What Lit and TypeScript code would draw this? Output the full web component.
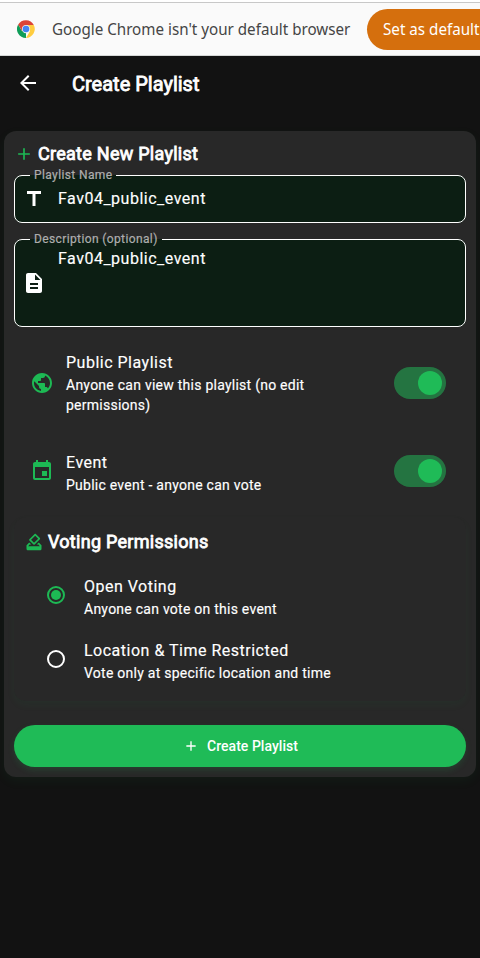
import { LitElement, html, css, svg } from "lit";
import { customElement, property, state } from "lit/decorators.js";

const PATHS: Record<string, string> = {
  back: "M20 11H7.83l5.59-5.59L12 4l-8 8 8 8 1.41-1.41L7.83 13H20v-2z",
  add: "M19 13h-6v6h-2v-6H5v-2h6V5h2v6h6v2z",
  title: "M5 4v3h5.5v12h3V7H19V4z",
  description:
    "M14 2H6c-1.1 0-1.99.9-1.99 2L4 20c0 1.1.89 2 1.99 2H18c1.1 0 2-.9 2-2V8l-6-6zm2 16H8v-2h8v2zm0-4H8v-2h8v2zm-3-5V3.5L18.5 9H13z",
  globe:
    "M12 2C6.48 2 2 6.48 2 12s4.48 10 10 10 10-4.48 10-10S17.52 2 12 2zm-1 17.93c-3.95-.49-7-3.85-7-7.93 0-.62.08-1.21.21-1.79L9 15v1c0 1.1.9 2 2 2v1.93zm6.9-2.54c-.26-.81-1-1.39-1.9-1.39h-1v-3c0-.55-.45-1-1-1H8v-2h2c.55 0 1-.45 1-1V7h2c1.1 0 2-.9 2-2v-.41c2.93 1.19 5 4.06 5 7.41 0 2.08-.8 3.97-2.1 5.39z",
  event:
    "M17 12h-5v5h5v-5zM16 1v2H8V1H6v2H5c-1.11 0-1.99.9-1.99 2L3 19c0 1.1.89 2 2 2h14c1.1 0 2-.9 2-2V5c0-1.1-.9-2-2-2h-1V1h-2zm3 18H5V8h14v11z",
  vote:
    "M18 13h-.68l-2 2h1.91L19 17H5l1.78-2h2.05l-2-2H6l-3 3v4c0 1.1.89 2 1.99 2H19c1.1 0 2-.89 2-2v-4l-3-3zm-1-5.05l-4.95 4.95-3.54-3.54 4.95-4.95L17 7.95zm-4.24-5.66L6.39 8.66c-.39.39-.39 1.02 0 1.41l4.95 4.95c.39.39 1.02.39 1.41 0l6.36-6.36c.39-.39.39-1.02 0-1.41L14.16 2.3c-.38-.4-1.01-.4-1.4-.01z",
};

@customElement("md-icon")
class MdIcon extends LitElement {
  @property() name = "";
  static styles = css`
    :host { display: block; flex: none; width: 24px; height: 24px; }
    svg { display: block; width: 100%; height: 100%; fill: currentColor; }
  `;
  render() {
    return html`<svg viewBox="0 0 24 24">${svg`<path d=${PATHS[this.name]}></path>`}</svg>`;
  }
}

@customElement("outlined-field")
class OutlinedField extends LitElement {
  @property() label = "";
  @property() value = "";
  @property() icon = "";
  static styles = css`
    :host { display: block; position: relative; box-sizing: border-box; border-radius: 8px; background: #0c1e13; }
    fieldset { position: absolute; inset: -8px 0 0; margin: 0; padding: 0 0 0 15px; min-width: 0; border: 1px solid #fff; border-radius: 8px; }
    legend { height: 16px; padding: 0 4px; font-size: 12px; line-height: 16px; letter-spacing: 0.38px; color: #aeaeae; white-space: nowrap; -webkit-text-stroke: 0.2px currentColor; }
    .inner { display: flex; height: 100%; align-items: center; padding-left: 8px; }
    md-icon { color: #fff; }
    .value { align-self: flex-start; margin: 12px 0 0 12px; font-size: 16px; line-height: 24px; letter-spacing: 0.5px; -webkit-text-stroke: 0.15px currentColor; }
    :host(.multi) .value { margin-top: 8px; }
  `;
  render() {
    return html`<fieldset><legend>${this.label}</legend></fieldset>
      <div class="inner"><md-icon name=${this.icon}></md-icon><span class="value">${this.value}</span></div>`;
  }
}

@customElement("app-root")
class AppRoot extends LitElement {
  @state() voting = 0;
  private toggles = [
    { icon: "globe", title: "Public Playlist", text: "Anyone can view this playlist (no edit permissions)", cls: "public" },
    { icon: "event", title: "Event", text: "Public event - anyone can vote", cls: "event" },
  ];
  private options = [
    { title: "Open Voting", text: "Anyone can vote on this event" },
    { title: "Location & Time Restricted", text: "Vote only at specific location and time" },
  ];

  static styles = css`
    :host { display: block; height: 958px; overflow: hidden; background: #121212; color: #fff; font-family: Roboto, sans-serif; }
    * { box-sizing: border-box; }
    .infobar { display: flex; align-items: center; height: 56px; padding: 3px 0 1px 17px; overflow: hidden; white-space: nowrap;
      background: linear-gradient(#fff 2px, #c8c8c8 2px, #c8c8c8 3px, #fafafa 3px, #fafafa 55px, #d5d7d6 55px);
      font: 16.5px/24px "Noto Sans", sans-serif; color: #454545; }
    .chrome { width: 18px; height: 18px; flex: none; margin-right: 17px; }
    .notice { width: 315px; flex: none; }
    .squeeze { display: inline-block; transform: scaleX(0.92); transform-origin: 0 50%; }
    .default { flex: none; width: 180px; height: 41px; border-radius: 21px; padding: 8px 0 0 16px; background: #d56f0d; color: #fff; }
    .appbar { display: flex; align-items: center; height: 56px; padding: 0 16px; gap: 32px; }
    .appbar md-icon { margin-top: -2px; }
    .heading { font-weight: 400; -webkit-text-stroke: 0.8px currentColor; margin: 0; white-space: nowrap; }
    .appbar .heading { font-size: 20px; line-height: 28px; }
    .card { margin: 19px 4px 0; height: 646px; padding: 10px; border-radius: 12px; background: #282828; box-shadow: 0 4px 12px rgba(29, 185, 84, 0.06); }
    .card-title { display: flex; align-items: center; height: 26px; gap: 4px; }
    .card-title md-icon { width: 20px; height: 20px; color: #1db954; }
    .card-title .heading, .vote-title .heading { font-size: 18px; line-height: 24px; letter-spacing: 0.27px; }
    .name { height: 48px; margin-top: 8px; }
    .desc { height: 88px; margin-top: 16px; }
    .row { display: flex; align-items: center; padding: 0 20px 0 16px; }
    .row md-icon { color: #1db954; }
    .public { height: 76px; margin-top: 18px; }
    .event { height: 48px; margin-top: 26px; }
    .copy { flex: 1; margin-left: 12px; }
    .event .copy { padding-top: 4px; }
    .name-line { font-size: 16px; line-height: 24px; letter-spacing: 0.5px; -webkit-text-stroke: 0.15px currentColor; }
    .sub-line { font-size: 14px; line-height: 20px; letter-spacing: 0.25px; -webkit-text-stroke: 0.15px currentColor; }
    .switch { width: 52px; height: 32px; border-radius: 16px; background: #247441; display: flex; align-items: center; justify-content: flex-end; padding-right: 4px; margin-left: 16px; }
    .thumb { width: 24px; height: 24px; border-radius: 50%; background: #1fbb57; }
    .voting { margin-top: 22px; height: 184px; border-radius: 12px; padding: 12px; background: #282828; box-shadow: 0 4px 8px rgba(29, 185, 84, 0.05); }
    .vote-title { display: flex; align-items: center; gap: 4px; height: 26px; margin-bottom: 8px; }
    .vote-title md-icon { width: 20px; height: 20px; color: #1db954; margin-left: -2px; }
    .option { display: flex; align-items: center; height: 64px; padding-left: 18px; }
    .radio { width: 24px; height: 24px; display: grid; place-items: center; color: #1db954; }
    .ring { width: 18px; height: 18px; border: 2px solid currentColor; border-radius: 50%; display: grid; place-items: center; }
    .dot { width: 10px; height: 10px; border-radius: 50%; background: currentColor; }
    .off { color: #fff; }
    .option .copy { margin-left: 16px; padding-top: 4px; white-space: nowrap; }
    .create { display: flex; align-items: center; justify-content: center; width: 100%; height: 42px; margin-top: 24px; gap: 8px; padding: 0 0 0 1px; border: 0; border-radius: 21px; background: #1fbb57; color: #fff; font: 500 14px/20px Roboto, sans-serif; letter-spacing: 0.03px; box-shadow: 0 3px 6px rgba(29, 185, 84, 0.16); }
    .create md-icon { width: 16px; height: 16px; }
  `;

  render() {
    return html`
      <div class="infobar">
        <svg class="chrome" viewBox="0 0 48 48">
          <path fill="#0f9d58" d="M24 24V48A24 24 0 0 1 3.2 12L13.6 30z"></path>
          <path fill="#ffcd40" d="M24 13H44.8A24 24 0 0 1 24 48L34.4 30z"></path>
          <path fill="#db4437" d="M3.2 12A24 24 0 0 1 44.8 13H24L13.6 30z"></path>
          <circle cx="24" cy="24" r="11" fill="#f1f1f1"></circle>
          <circle cx="24" cy="24" r="8.8" fill="#4285f4"></circle>
        </svg>
        <span class="notice"><span class="squeeze">Google Chrome isn't your default browser</span></span>
        <div class="default"><span class="squeeze">Set as default</span></div>
      </div>
      <header class="appbar"><md-icon name="back"></md-icon><h1 class="heading">Create Playlist</h1></header>
      <main class="card">
        <div class="card-title"><md-icon name="add"></md-icon><h2 class="heading">Create New Playlist</h2></div>
        <outlined-field class="name" label="Playlist Name" value="Fav04_public_event" icon="title"></outlined-field>
        <outlined-field class="desc multi" label="Description (optional)" value="Fav04_public_event" icon="description"></outlined-field>
        ${this.toggles.map((t) => html`
          <div class="row ${t.cls}">
            <md-icon name=${t.icon}></md-icon>
            <div class="copy"><div class="name-line">${t.title}</div><div class="sub-line">${t.text}</div></div>
            <div class="switch"><div class="thumb"></div></div>
          </div>`)}
        <section class="voting">
          <div class="vote-title"><md-icon name="vote"></md-icon><h3 class="heading">Voting Permissions</h3></div>
          ${this.options.map((o, i) => html`
            <div class="option" @click=${() => (this.voting = i)}>
              <div class="radio ${i === this.voting ? "" : "off"}"><div class="ring">${i === this.voting ? html`<div class="dot"></div>` : ""}</div></div>
              <div class="copy"><div class="name-line">${o.title}</div><div class="sub-line">${o.text}</div></div>
            </div>`)}
        </section>
        <button class="create"><md-icon name="add"></md-icon><span>Create Playlist</span></button>
      </main>`;
  }
}
